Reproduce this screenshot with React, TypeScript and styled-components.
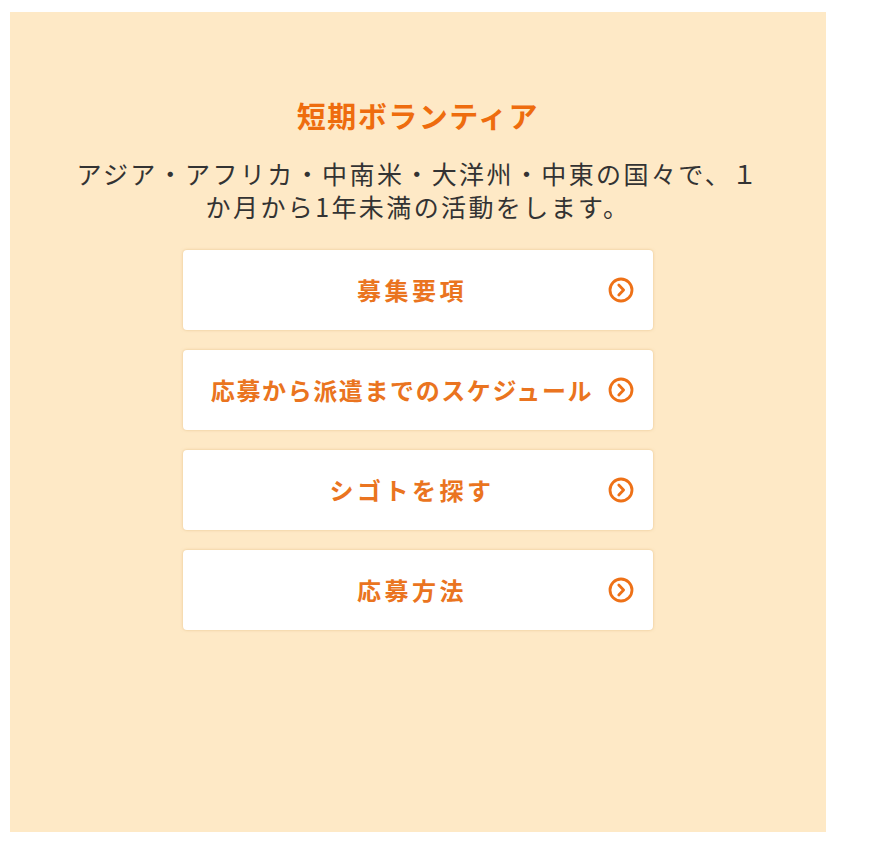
import React from 'react';
import styled, { createGlobalStyle } from 'styled-components';

const GlobalStyle = createGlobalStyle`
    body {
        margin: 0;
        background: #fff;
        font-family: "Noto Sans CJK JP", "Noto Sans", sans-serif;
    }
`;

const Page = styled.div`
    padding: 12px 0 0 10px;
`;

const Panel = styled.section`
    width: 816px;
    height: 820px;
    box-sizing: border-box;
    background-color: #fee9c6;
    padding-top: 86px;
    display: flex;
    flex-direction: column;
    align-items: center;
`;

const Title = styled.h2`
    margin: 0;
    font-size: 29px;
    line-height: 35px;
    font-weight: 700;
    letter-spacing: 1.5px;
    color: #ee6c0e;
`;

const Lead = styled.p`
    margin: 24px 0 0;
    font-size: 25px;
    line-height: 33px;
    letter-spacing: 2.4px;
    color: #333;
    text-align: center;
`;

const LinkList = styled.ul`
    list-style: none;
    margin: 27px 0 0;
    padding: 0;
    display: flex;
    flex-direction: column;
    gap: 20px;
`;

const LinkButton = styled.a`
    position: relative;
    display: flex;
    align-items: center;
    justify-content: center;
    width: 470px;
    height: 80px;
    box-sizing: border-box;
    padding-right: 12px;
    background: #fff;
    border-radius: 4px;
    box-shadow: 0 0 3px rgba(214, 165, 95, 0.55);
    color: #ea7420;
    text-decoration: none;
    cursor: pointer;
`;

const Label = styled.span<{ $tight?: boolean }>`
    font-size: 24px;
    font-weight: 700;
    letter-spacing: ${(p) => (p.$tight ? '1.6px' : '3.5px')};
    margin-right: ${(p) => (p.$tight ? '20px' : '0')};
    line-height: 1;
`;

const Arrow = styled.svg`
    position: absolute;
    right: 19px;
    top: 50%;
    width: 26px;
    height: 26px;
    margin-top: -13px;
`;

const ArrowIcon = () => (
    <Arrow viewBox="0 0 26 26" fill="none">
        <circle cx="13" cy="13" r="11" stroke="#ee7117" strokeWidth="2.8" />
        <path d="M10.8 8 L15.6 13 L10.8 18" stroke="#ee7117" strokeWidth="2.8" strokeLinecap="round" strokeLinejoin="round" />
    </Arrow>
);

const links = [
    { label: '募集要項' },
    { label: '応募から派遣までのスケジュール', tight: true },
    { label: 'シゴトを探す' },
    { label: '応募方法' },
];

export default function App() {
    return (
        <>
            <GlobalStyle />
            <Page>
                <Panel>
                    <Title>短期ボランティア</Title>
                    <Lead>
                        アジア・アフリカ・中南米・大洋州・中東の国々で、１
                        <br />
                        か月から1年未満の活動をします。
                    </Lead>
                    <LinkList>
                        {links.map((link) => (
                            <li key={link.label}>
                                <LinkButton>
                                    <Label $tight={link.tight}>{link.label}</Label>
                                    <ArrowIcon />
                                </LinkButton>
                            </li>
                        ))}
                    </LinkList>
                </Panel>
            </Page>
        </>
    );
}
